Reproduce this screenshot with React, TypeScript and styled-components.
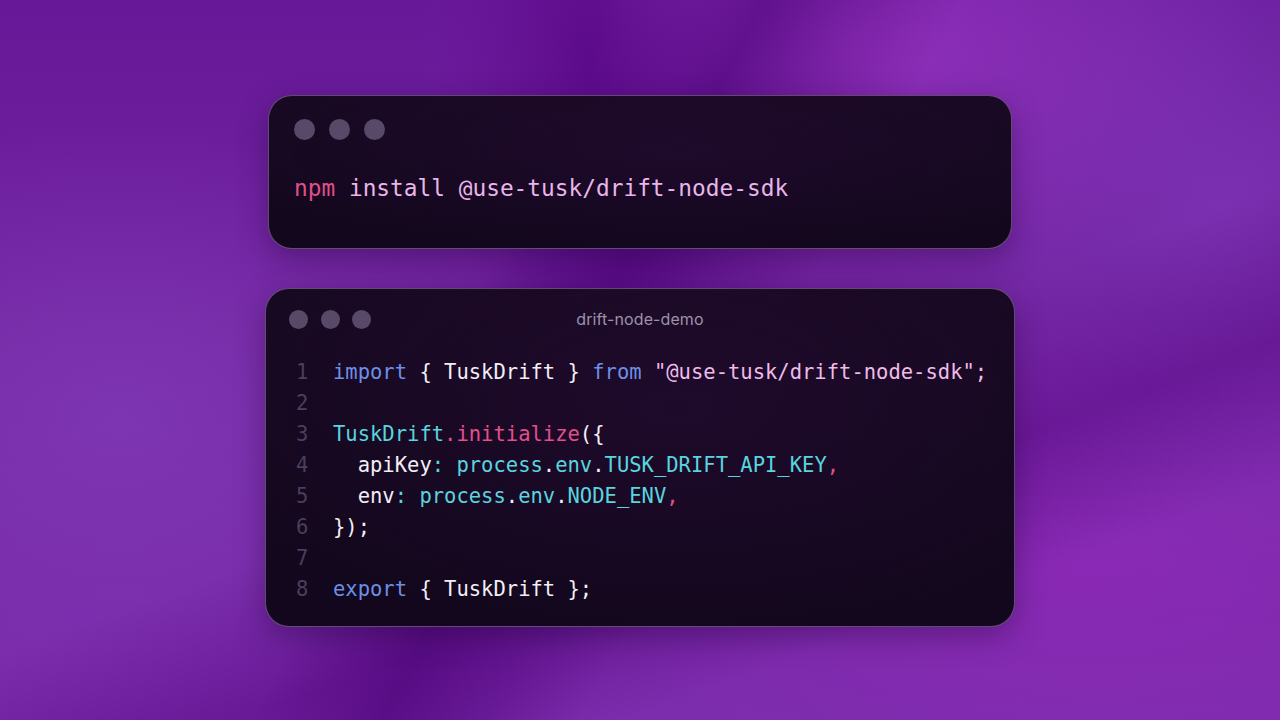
import React from "react";
import styled, { createGlobalStyle } from "styled-components";

const Global = createGlobalStyle`
  html, body { margin: 0; padding: 0; }
  body {
    width: 1280px;
    height: 720px;
    overflow: hidden;
    font-family: "Inter", "Noto Sans", sans-serif;
  }
`;

const Page = styled.div`
  width: 1280px;
  height: 720px;
  box-sizing: border-box;
  padding-top: 95px;
  display: flex;
  flex-direction: column;
  align-items: center;
  gap: 39px;
  background:
    radial-gradient(ellipse 160px 320px at 590px 60px, rgba(84, 4, 130, 0.8), rgba(84, 4, 130, 0)),
    linear-gradient(118deg, rgba(80, 0, 120, 0) 38%, rgba(80, 6, 124, 0.7) 46%, rgba(80, 0, 120, 0) 58%),
    linear-gradient(160deg, rgba(0,0,0,0) 55%, rgba(86, 6, 128, 0.5) 68%, rgba(0,0,0,0) 80%),
    radial-gradient(ellipse 420px 260px at 840px 40px, rgba(165, 60, 205, 0.7), rgba(165, 60, 205, 0)),
    radial-gradient(ellipse 360px 420px at 1220px 200px, rgba(130, 60, 190, 0.6), rgba(130, 60, 190, 0)),
    radial-gradient(ellipse 400px 300px at 120px 420px, rgba(130, 60, 185, 0.7), rgba(130, 60, 185, 0)),
    radial-gradient(ellipse 500px 250px at 1100px 560px, rgba(150, 40, 190, 0.6), rgba(150, 40, 190, 0)),
    linear-gradient(180deg, #661898 0%, #72239f 45%, #7c2dad 100%);
`;

const Window = styled.div<{ $w: number; $h: number }>`
  width: ${(p) => p.$w}px;
  height: ${(p) => p.$h}px;
  box-sizing: border-box;
  border-radius: 24px;
  border: 1.5px solid rgba(190, 160, 215, 0.45);
  background:
    radial-gradient(ellipse 60% 70% at 55% 35%, rgba(40, 12, 56, 0.45), rgba(40, 12, 56, 0)),
    linear-gradient(180deg, #180922 0%, #12071c 100%);
  box-shadow: 0 10px 30px rgba(30, 0, 50, 0.35);
  display: flex;
  flex-direction: column;
`;

const TopWindow = styled(Window)`
  padding: 23px 0 0 25px;
`;

const BottomWindow = styled(Window)`
  padding: 20px 0 0 0;
`;

const Dots = styled.div<{ $size: number; $gap: number }>`
  display: flex;
  gap: ${(p) => p.$gap}px;
  & > span {
    width: ${(p) => p.$size}px;
    height: ${(p) => p.$size}px;
    border-radius: 50%;
    background: #584968;
  }
`;

const Header = styled.div`
  display: grid;
  grid-template-columns: 1fr auto 1fr;
  align-items: center;
  padding: 0 23px;
`;

const Title = styled.div`
  font-family: "Inter", "Noto Sans", sans-serif;
  font-size: 16px;
  color: #9d92a9;
  letter-spacing: 0.1px;
`;

const Command = styled.div`
  margin-top: 33px;
  font-family: "DejaVu Sans Mono", "Liberation Mono", monospace;
  font-size: 22.8px;
  line-height: 30px;
  color: #e8b6e9;
  white-space: pre;
`;

const Code = styled.div`
  margin-top: 28px;
  padding-left: 30px;
  display: grid;
  grid-template-columns: 37px 1fr;
  font-family: "DejaVu Sans Mono", "Liberation Mono", monospace;
  font-size: 20.5px;
  line-height: 31px;
  white-space: pre;
  color: #f2eef6;
`;

const LineNo = styled.div`
  color: #4a3f5c;
`;

const Tok = styled.span<{ $c: string }>`
  color: ${(p) => p.$c};
`;

const C = {
  kw: "#6d8fe6",
  white: "#f2eef6",
  str: "#efbbe9",
  cyan: "#5ad4df",
  pink: "#e0508b",
};

type T = [string, string];
const lines: T[][] = [
  [["import", C.kw], [" { TuskDrift } ", C.white], ["from", C.kw], [" \"@use-tusk/drift-node-sdk\";", C.str]],
  [],
  [["TuskDrift", C.cyan], [".initialize", C.pink], ["({", C.white]],
  [["  apiKey", C.white], [": ", C.cyan], ["process", C.cyan], [".", C.white], ["env", C.cyan], [".", C.white], ["TUSK_DRIFT_API_KEY", C.cyan], [",", C.pink]],
  [["  env", C.white], [": ", C.cyan], ["process", C.cyan], [".", C.white], ["env", C.cyan], [".", C.white], ["NODE_ENV", C.cyan], [",", C.pink]],
  [["});", C.white]],
  [],
  [["export", C.kw], [" { TuskDrift };", C.white]],
];

export default function App() {
  return (
    <>
      <Global />
      <Page>
        <TopWindow $w={744} $h={154}>
          <Dots $size={21} $gap={14}>
            <span />
            <span />
            <span />
          </Dots>
          <Command>
            <Tok $c={C.pink}>npm</Tok> install @use-tusk/drift-node-sdk
          </Command>
        </TopWindow>
        <BottomWindow $w={750} $h={339}>
          <Header>
            <Dots $size={19} $gap={12.5}>
              <span />
              <span />
              <span />
            </Dots>
            <Title>drift-node-demo</Title>
            <div />
          </Header>
          <Code>
            {lines.map((toks, i) => (
              <React.Fragment key={i}>
                <LineNo>{i + 1}</LineNo>
                <div>
                  {toks.length === 0 ? " " : toks.map(([t, c], j) => (
                    <Tok key={j} $c={c}>
                      {t}
                    </Tok>
                  ))}
                </div>
              </React.Fragment>
            ))}
          </Code>
        </BottomWindow>
      </Page>
    </>
  );
}
